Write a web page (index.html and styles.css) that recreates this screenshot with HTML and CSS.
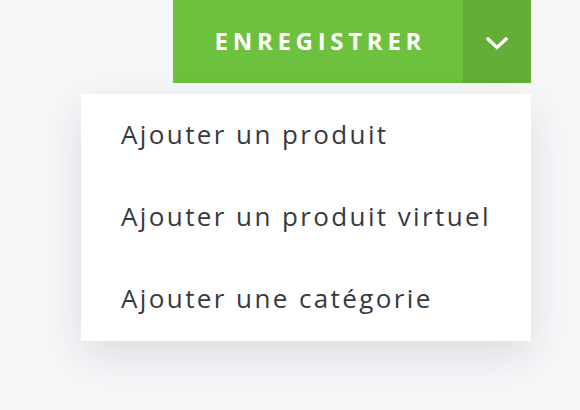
FILE: index.html
```html
<!DOCTYPE html>
<html lang="fr">
<head>
<meta charset="utf-8">
<link rel="stylesheet" href="styles.css">
</head>
<body>
<div class="wrap">
  <div class="split">
    <button class="save">ENREGISTRER</button>
    <button class="toggle" aria-label="Plus d'options">
      <svg width="22" height="13" viewBox="0 0 22 13"><path d="M2 2 L11 10.5 L20 2" fill="none" stroke="#fff" stroke-width="3.4" stroke-linecap="square"/></svg>
    </button>
  </div>
  <ul class="menu">
    <li class="item">Ajouter un produit</li>
    <li class="item">Ajouter un produit virtuel</li>
    <li class="item">Ajouter une catégorie</li>
  </ul>
</div>
</body>
</html>
```
FILE: styles.css
```css
html, body {
  margin: 0;
  padding: 0;
  background: #f6f7f9;
  width: 580px;
  height: 410px;
  overflow: hidden;
}
.wrap {
  margin-left: 81px;
  width: 450px;
  display: flex;
  flex-direction: column;
  align-items: flex-end;
  gap: 11px;
  font-family: "Open Sans", "DejaVu Sans", sans-serif;
}
.split {
  display: flex;
  height: 83px;
}
.save {
  width: 290px;
  border: 0;
  margin: 0;
  background: #6dc13e;
  color: #fff;
  font-family: inherit;
  font-weight: 700;
  font-size: 24px;
  letter-spacing: 4.7px;
  padding: 0 0 2px 4.7px;
}
.toggle {
  width: 68px;
  border: 0;
  margin: 0;
  padding: 4px 0 0 0;
  background: #62ae36;
  display: flex;
  align-items: center;
  justify-content: center;
}
.menu {
  list-style: none;
  margin: 0;
  padding: 0;
  width: 450px;
  background: #fff;
  box-shadow: 0 14px 40px rgba(30, 35, 40, 0.12);
}
.item {
  height: 82.3px;
  display: flex;
  align-items: center;
  padding-left: 40px;
  font-size: 26px;
  font-weight: 500;
  letter-spacing: 2.4px;
  color: #363a3e;
  padding-bottom: 3px;
  box-sizing: border-box;
}
```
